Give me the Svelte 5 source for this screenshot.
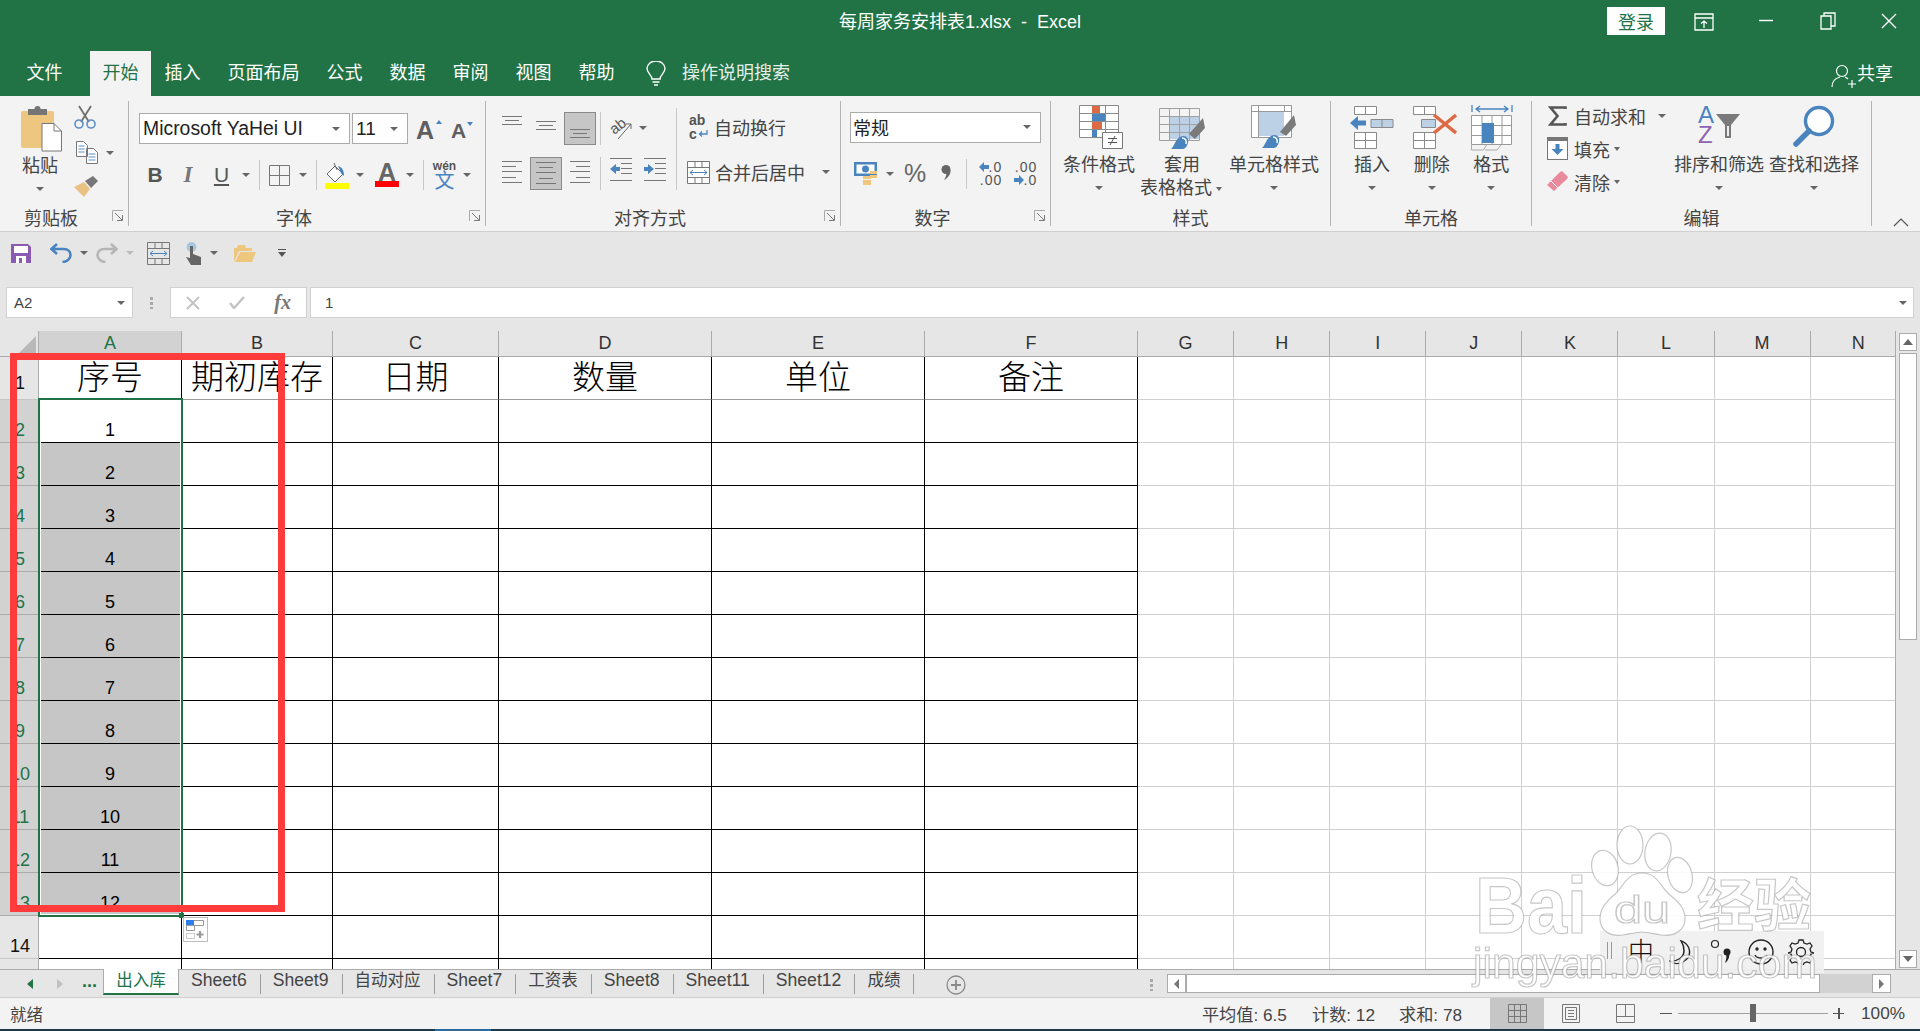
<script>
	const columns = [
		{ id: 'A', width: 143 }, { id: 'B', width: 151 }, { id: 'C', width: 166 }, { id: 'D', width: 213 },
		{ id: 'E', width: 213 }, { id: 'F', width: 213 }, { id: 'G', width: 96.1 }, { id: 'H', width: 96.1 },
		{ id: 'I', width: 96.1 }, { id: 'J', width: 96.1 }, { id: 'K', width: 96.1 }, { id: 'L', width: 96.1 },
		{ id: 'M', width: 96.1 }, { id: 'N', width: 96.1 }
	];
	const heads = ['序号', '期初库存', '日期', '数量', '单位', '备注'];
	const rows = Array.from({ length: 15 }, (_, i) => i + 1);
	const gridTemplate = '39px ' + columns.map((c) => c.width + 'px').join(' ');

	const tabs = [
		{ name: 'Sheet6' }, { name: 'Sheet9' }, { name: '自动对应', cjk: true }, { name: 'Sheet7' },
		{ name: '工资表', cjk: true }, { name: 'Sheet8' }, { name: 'Sheet11' }, { name: 'Sheet12' },
		{ name: '成绩', cjk: true }
	];
	const menu = ['插入', '页面布局', '公式', '数据', '审阅', '视图', '帮助'];

	const alignLines = [[0, 20, 3], [3, 17, 7], [0, 20, 11]];
	const five = (a, b) => [3, 8, 13, 19, 24].map((y, i) => (i % 2 ? [a, b, y] : [0, 20, y]));
</script>

{#snippet bars(list)}
	<svg width="20" height="27" viewBox="0 0 20 27">
		{#each list as l}
			<line x1={l[0]} x2={l[1]} y1={l[2] + 0.5} y2={l[2] + 0.5} stroke="#777" />
		{/each}
	</svg>
{/snippet}

{#snippet launcher()}
	<svg class="launcher" width="12" height="12" viewBox="0 0 12 12" fill="none" stroke="#777">
		<path d="M.5 11V.5H11" stroke="#aaa" /><path d="M3 3l7 7M5 10.500h5.500V5" />
	</svg>
{/snippet}

{#snippet arrowLeft()}
	<svg width="10" height="10" viewBox="0 0 10 10"><path d="M0 5l5-5v3h5v4H5v3z" fill="#4a84bf" /></svg>
{/snippet}

{#snippet arrowRight()}
	<svg width="10" height="10" viewBox="0 0 10 10"><path d="M10 5L5 0v3H0v4h5v3z" fill="#4a84bf" /></svg>
{/snippet}

<div class="app">
	<header class="titlebar">
		<div></div>
		<div class="doc-title">每周家务安排表1.xlsx&nbsp; - &nbsp;Excel</div>
		<div class="win">
			<button class="login">登录</button>
			<svg class="w1" width="20" height="20" viewBox="0 0 20 20" fill="none" stroke="#fff" stroke-width="1.3">
				<path d="M1 1h18v16H1zM1 5h18M10 15V8M7 10.500L10 8l3 2.500" />
			</svg>
			<svg class="w2" width="14" height="14" viewBox="0 0 14 14"><path d="M0 7.500h14" stroke="#fff" stroke-width="1.4" /></svg>
			<svg class="w3" width="16" height="18" viewBox="0 0 16 18" fill="none" stroke="#fff" stroke-width="1.3">
				<path d="M1 4h10v13H1zM4 4V1h11v13h-4" />
			</svg>
			<svg class="w4" width="16" height="16" viewBox="0 0 16 16" fill="none" stroke="#fff" stroke-width="1.4"><path d="M1 1l14 14M15 1L1 15" /></svg>
		</div>
	</header>

	<nav class="menubar">
		<span class="menu first">文件</span>
		<span class="menu active">开始</span>
		{#each menu as m}
			<span class="menu">{m}</span>
		{/each}
		<svg class="bulb" width="20" height="25" viewBox="0 0 20 25" fill="none" stroke="#fff" stroke-width="1.4">
			<path d="M6 18c0-4-5-6-5-10.500a9 7.500 0 0 1 18 0C19 12 14 14 14 18zM6.500 21h7M8 24h4" />
		</svg>
		<span class="search">操作说明搜索</span>
		<span class="share">
			<svg width="26" height="24" viewBox="0 0 26 24" fill="none" stroke="#fff" stroke-width="1.2">
				<circle cx="11" cy="7" r="5.500" /><path d="M1 23c0-6 4-9 8-10M14 13c1 .500 2 1 3 2M17 20h8M21 16v8" />
			</svg>
			共享
		</span>
	</nav>

	<section class="ribbon">
		<!-- 剪贴板 -->
		<div class="group g-clip launch">
			<div class="body">
				<div class="paste">
					<svg width="42" height="46" viewBox="0 0 42 46">
						<rect x="0" y="5" width="33" height="37" rx="2" fill="#edc77f" />
						<rect x="7" y="3" width="19" height="6" fill="#757575" /><circle cx="16.500" cy="3" r="3" fill="#757575" />
						<path d="M21 17.500h12l7.500 7.500v20H21z" fill="#fff" stroke="#777" />
						<path d="M33 17.500V25h7.500" fill="none" stroke="#777" />
					</svg>
					<span class="biglabel">粘贴</span>
					<i class="caret"></i>
				</div>
				<div class="clip-tools">
					<svg width="22" height="24" viewBox="0 0 22 24" fill="none">
						<path d="M5 1l10 16M17 1L7 17" stroke="#6f6f6f" stroke-width="1.800" />
						<circle cx="5" cy="19" r="4" stroke="#5b8fc6" stroke-width="1.600" /><circle cx="17" cy="19" r="4" stroke="#5b8fc6" stroke-width="1.600" />
					</svg>
					<div class="with-caret">
						<svg width="22" height="23" viewBox="0 0 22 23" fill="#fff" stroke="#777">
							<path d="M.5.500h7l4 4v11H.5zM10.500 7.500h7l4 4v11h-11z" />
							<path d="M2.500 5h6M2.500 8h6M2.500 11h6M12.500 13h7M12.500 16h7M12.500 19h7" stroke="#5b8fc6" />
						</svg>
						<i class="caret"></i>
					</div>
					<svg width="24" height="22" viewBox="0 0 24 22">
						<path d="M0 11l10-5 6 7-6 8z" fill="#e9c283" /><path d="M11 5l8-5 5 5-7 7z" fill="#777" />
					</svg>
				</div>
			</div>
			<div class="label">剪贴板{@render launcher()}</div>
		</div>

		<!-- 字体 -->
		<div class="group g-font launch">
			<div class="body col">
				<div class="font-row">
					<div class="combo font-name">Microsoft YaHei UI<i class="caret"></i></div>
					<div class="combo font-size">11<i class="caret"></i></div>
					<span class="grow">A<i class="tri up"></i></span>
					<span class="grow small">A<i class="tri down"></i></span>
				</div>
				<div class="font-tools">
					<b class="fb">B</b>
					<em class="fi">I</em>
					<u class="fu">U</u>
					<i class="caret"></i>
					<span class="vsep"></span>
					<svg width="21" height="21" viewBox="0 0 21 21" fill="none" stroke="#777"><path d="M.5.500h20v20H.500zM10.500 1v19M1 10.500h19" /></svg>
					<i class="caret"></i>
					<span class="vsep"></span>
					<svg width="24" height="27" viewBox="0 0 24 27">
						<path d="M10 4L2 12l8 8 8-8z" fill="#fff" stroke="#666" /><path d="M9 1l3 7" stroke="#666" fill="none" />
						<path d="M13 4c4 1 6 4 6 10-2-2-4-3-4-6z" fill="#4a84bf" /><rect y="21" width="24" height="6" fill="#ff0" />
					</svg>
					<i class="caret"></i>
					<span class="color-a">A</span>
					<i class="caret"></i>
					<span class="vsep"></span>
					<span class="wen"><small>wén</small><span>文</span></span>
					<i class="caret"></i>
				</div>
			</div>
			<div class="label">字体{@render launcher()}</div>
		</div>

		<!-- 对齐方式 -->
		<div class="group g-align launch">
			<div class="body">
				<div class="align-grid">
					<span class="cell">{@render bars(alignLines)}</span>
					<span class="cell mid">{@render bars(alignLines)}</span>
					<span class="cell sel low">{@render bars(alignLines)}</span>
					<span class="vsep"></span>
					<span class="cell orient">
						<svg width="24" height="24" viewBox="0 0 24 24" fill="none" stroke="#666">
							<text x="1" y="15" transform="rotate(-38 9 11)" class="ab">ab</text><path d="M9 23L22 8M17 8h5v5" />
						</svg>
					</span>
					<span class="cell start"><i class="caret"></i></span>

					<span class="cell">{@render bars(five(0, 14))}</span>
					<span class="cell sel">{@render bars(five(3, 17))}</span>
					<span class="cell">{@render bars(five(6, 20))}</span>
					<span class="vsep"></span>
					<span class="cell">
						<svg width="22" height="23" viewBox="0 0 22 23" fill="none" stroke="#777">
							<path d="M0 .500h22M11 5.500h11M11 10.500h11M11 15.500h11M0 22.500h22" /><path d="M0 11l6-5v3h4v4H6v3z" fill="#4a84bf" stroke="none" />
						</svg>
					</span>
					<span class="cell">
						<svg width="22" height="23" viewBox="0 0 22 23" fill="none" stroke="#777">
							<path d="M0 .500h22M11 5.500h11M11 10.500h11M11 15.500h11M0 22.500h22" /><path d="M10 11L4 6v3H0v4h4v3z" fill="#4a84bf" stroke="none" />
						</svg>
					</span>
				</div>
				<div class="wrap-col">
					<div class="wrap-row">
						<span class="abc"><span>ab</span><span>c<svg width="11" height="10" viewBox="0 0 11 10" fill="none" stroke="#4a84bf" stroke-width="1.300"><path d="M9 1v4H2M4 2.500L1.500 5 4 7.500" /></svg></span></span>
						<span>自动换行</span>
					</div>
					<div class="wrap-row merge">
						<svg width="23" height="23" viewBox="0 0 23 23" fill="#fff" stroke="#777">
							<path d="M.5.500h22v22H.500zM.5 6.500h22M.5 16.500h22M8 1v5M15 1v5M8 17v5M15 17v5" />
							<path d="M3 11.500h17M6 9l-3 2.500L6 14M17 9l3 2.500L17 14" stroke="#4a84bf" fill="none" />
						</svg>
						<span>合并后居中</span>
						<i class="caret"></i>
					</div>
				</div>
			</div>
			<div class="label">对齐方式{@render launcher()}</div>
		</div>

		<!-- 数字 -->
		<div class="group g-num launch">
			<div class="body col">
				<div class="combo num-format">常规<i class="caret"></i></div>
				<div class="num-tools">
					<svg width="24" height="23" viewBox="0 0 24 23">
						<rect width="23" height="14" fill="#4a84bf" /><rect x="2.500" y="2.500" width="18" height="9" fill="#fff" /><circle cx="11.500" cy="7" r="3.500" fill="#4a84bf" />
						<path d="M9 14h8v3H9zM9 18h8v5H9z" fill="#eec77f" /><path d="M16 9h7v3h-7zM16 13h7v3h-7z" fill="#eec77f" />
					</svg>
					<i class="caret"></i>
					<span class="pct">%</span>
					<svg class="comma" width="10" height="15" viewBox="0 0 10 15"><circle cx="5" cy="4.500" r="4.500" fill="#666" /><path d="M9.500 5C10 9 7 13 3 15c2-3 3-6 2-9z" fill="#666" /></svg>
					<span class="vsep"></span>
					<span class="dec"><span>{@render arrowLeft()}.0</span><span>.00</span></span>
					<span class="dec"><span>.00</span><span>{@render arrowRight()}.0</span></span>
				</div>
			</div>
			<div class="label">数字{@render launcher()}</div>
		</div>

		<!-- 样式 -->
		<div class="group g-style">
			<div class="body">
				<div class="big s1">
					<span class="icon">
						<svg width="44" height="44" viewBox="0 0 44 44">
							<path d="M.5.500h39v32H.500zM0 8.500h40M0 16.500h40M0 24.500h40M13.500 0v33M26.500 0v33" fill="#fff" stroke="#8a8a8a" />
							<rect x="13" y="1" width="8" height="7" fill="#dd6a45" /><rect x="13" y="9" width="13" height="7" fill="#4a84bf" />
							<rect x="13" y="17" width="10" height="7" fill="#dd6a45" /><rect x="13" y="25" width="5" height="7" fill="#4a84bf" />
							<path d="M23.500 27.500h20v16h-20z" fill="#fff" stroke="#777" /><path d="M29 33.500h9M29 37.500h9M31 40l5-9" stroke="#555" />
						</svg>
					</span>
					<span>条件格式</span><i class="caret"></i>
				</div>
				<div class="big s2">
					<span class="icon low">
						<svg width="46" height="42" viewBox="0 0 46 42">
							<rect x="10" y="9" width="30" height="22" fill="#bcd0e6" />
							<path d="M.5.500h40v32H.500zM0 8.500h40M0 16.500h40M0 24.500h40M10.500 0v33M20.500 0v33M30.500 0v33" fill="none" stroke="#a0a0a0" />
							<path d="M30 26L44 10l2 10-10 11z" fill="#7a7a7a" /><path d="M12 41c3-2 4-9 9-12 3-2 7-1 8 2 1 4-2 10-5 10z" fill="#4a84bf" />
							<path d="M23 30c3 0 5 2 4 6" stroke="#fff" fill="none" stroke-width="1.500" />
						</svg>
					</span>
					<span>套用</span>
					<span class="line2">表格格式<i class="caret tight"></i></span>
				</div>
				<div class="big s3">
					<span class="icon">
						<svg width="46" height="44" viewBox="0 0 46 44">
							<path d="M.5.500h40v32H.500z" fill="#fff" stroke="#999" /><rect x="8" y="7" width="25" height="24" fill="#bcd0e6" />
							<path d="M0 6.500h40M7.500 0v33M33.500 0v7" stroke="#999" fill="none" />
							<path d="M29 27l14-17 2 10-10 11z" fill="#7a7a7a" /><path d="M11 43c3-2 4-9 9-12 3-2 7-1 8 2 1 4-2 10-5 10z" fill="#4a84bf" />
							<path d="M22 32c3 0 5 2 4 6" stroke="#fff" fill="none" stroke-width="1.500" />
						</svg>
					</span>
					<span>单元格样式</span><i class="caret"></i>
				</div>
			</div>
			<div class="label">样式</div>
		</div>

		<!-- 单元格 -->
		<div class="group g-cells">
			<div class="body">
				<div class="big c1">
					<span class="icon">
						<svg width="44" height="44" viewBox="0 0 44 44" fill="#fff" stroke="#8a8a8a">
							<path d="M4.500 1.500h22v8h-22zM15.500 1v8M4.500 27.500h22v16h-22zM4.500 35.500h22M15.500 28v16" />
							<path d="M21 14.500h22v8H21zM32 14v8" fill="#bcd0e6" /><path d="M0 18l8-7v4.500h8v5H8V25z" fill="#4a84bf" stroke="none" />
						</svg>
					</span>
					<span>插入</span><i class="caret"></i>
				</div>
				<div class="big c2">
					<span class="icon">
						<svg width="44" height="44" viewBox="0 0 44 44" fill="#fff" stroke="#8a8a8a">
							<path d="M.5 1.500h22v8H.500zM11.500 1v8M.5 27.500h22v16H.500zM.5 35.500h22M11.500 28v16" />
							<path d="M8.500 14.500h14v8h-14z" fill="#bcd0e6" /><path d="M21 10l22 18M43 10L21 28" stroke="#dd6a45" stroke-width="3.500" fill="none" />
						</svg>
					</span>
					<span>删除</span><i class="caret"></i>
				</div>
				<div class="big c3">
					<span class="icon">
						<svg width="42" height="46" viewBox="0 0 42 46" fill="none" stroke="#8a8a8a">
							<path d="M1 0v7M41 0v7M5 4h32M9 1L5 4l4 3M33 1l4 3-4 3" stroke="#4a84bf" stroke-width="1.300" />
							<path d="M.5 10.500h40v29H.500zM.5 20.500h40M.5 30.500h40M11 10v30M21 10v30M31 10v30" fill="#fff" stroke="#999" />
							<rect x="11" y="18" width="12" height="20" fill="#4a84bf" stroke="none" />
							<path d="M.5 40v5h12l3-5M14 45h12l4-5" stroke="#aaa" />
						</svg>
					</span>
					<span>格式</span><i class="caret"></i>
				</div>
			</div>
			<div class="label">单元格</div>
		</div>

		<!-- 编辑 -->
		<div class="group g-edit">
			<div class="body">
				<div class="edit-col">
					<div class="edit-row">
						<svg width="18" height="20" viewBox="0 0 18 20" fill="none" stroke="#555" stroke-width="2.600"><path d="M17 3V1.500H2L9 10 2 18.500h15V17" /></svg>
						<span>自动求和</span><i class="caret wide"></i>
					</div>
					<div class="edit-row">
						<svg width="21" height="23" viewBox="0 0 21 23">
							<rect x=".5" y=".5" width="20" height="22" fill="#fff" stroke="#777" /><rect width="21" height="4" fill="#777" />
							<path d="M10.500 18l-6-6h4V7h4v5h4z" fill="#4a84bf" />
						</svg>
						<span>填充</span><i class="caret tight"></i>
					</div>
					<div class="edit-row">
						<svg width="21" height="21" viewBox="0 0 21 21"><path d="M0 14L13 1c1-1 2-1 3 0l4 4c1 1 1 2 0 3L7 20z" fill="#e98a9c" /><path d="M4 10l7 7" stroke="#fff" /></svg>
						<span>清除</span><i class="caret tight"></i>
					</div>
				</div>
				<div class="big e1">
					<span class="icon">
						<span class="az"><span class="blue">A</span><span class="purple">Z</span></span>
						<svg width="24" height="24" viewBox="0 0 24 24"><path d="M0 0h24l-9 11v13H9V11z" fill="#7a7a7a" /><path d="M11 12v10h2V12z" fill="#eee" /></svg>
					</span>
					<span>排序和筛选</span><i class="caret"></i>
				</div>
				<div class="big e2">
					<span class="icon">
						<svg width="42" height="42" viewBox="0 0 42 42" fill="none" stroke="#4a84bf">
							<circle cx="26" cy="16" r="13.500" stroke-width="3.400" fill="#fff" /><path d="M16 26L3 39" stroke-width="5.500" stroke-linecap="round" />
						</svg>
					</span>
					<span>查找和选择</span><i class="caret"></i>
				</div>
			</div>
			<div class="label">编辑</div>
		</div>

		<div class="collapse">
			<svg width="16" height="9" viewBox="0 0 16 9" fill="none" stroke="#555" stroke-width="1.200"><path d="M1 8l7-7 7 7" /></svg>
		</div>
	</section>

	<div class="qat">
		<svg class="q-save" width="20" height="19" viewBox="0 0 20 19">
			<path d="M0 0h17l3 3v16H0z" fill="#8a5bb0" /><rect x="3" y="2" width="14" height="7" fill="#fff" /><rect x="5" y="12" width="10" height="7" fill="#fff" /><rect x="8" y="14" width="3" height="5" fill="#8a5bb0" />
		</svg>
		<svg class="q-undo" width="22" height="20" viewBox="0 0 22 20" fill="none" stroke="#4a84bf" stroke-width="2.600"><path d="M1.500 6h12c5 0 7 3 7 6s-3 7-8 7M7 1L1.500 6 7 11" /></svg>
		<i class="caret"></i>
		<svg class="q-redo" width="22" height="20" viewBox="0 0 22 20" fill="none" stroke="#b5b5b5" stroke-width="2.600"><path d="M20.500 6h-12c-5 0-7 3-7 6s3 7 8 7M15 1l5.500 5L15 11" /></svg>
		<i class="caret pale"></i>
		<svg class="q-merge" width="23" height="23" viewBox="0 0 23 23" fill="none" stroke="#777">
			<path d="M.5.500h22v22H.500zM.5 6.500h22M.5 16.500h22M8 1v5M15 1v5M8 17v5M15 17v5" />
			<path d="M3 11.500h17M6 9l-3 2.500L6 14M17 9l3 2.500L17 14" stroke="#4a84bf" />
		</svg>
		<svg class="q-touch" width="17" height="23" viewBox="0 0 17 23">
			<circle cx="6.500" cy="5" r="5" fill="#a9c6e3" /><path d="M5 4h3v8l8 3v8H6l-5-8 4 1z" fill="#666" />
		</svg>
		<i class="caret"></i>
		<svg class="q-open" width="23" height="18" viewBox="0 0 23 18"><path d="M1 18V4h3l1-3h7l1 3h6v3H6L1 18zM2 18l5-10h16l-4 10z" fill="#eec77f" /></svg>
		<svg class="q-more" width="10" height="9" viewBox="0 0 10 9"><path d="M1 .500h8" stroke="#555" /><path d="M1 3h8L5 8z" fill="#555" /></svg>
	</div>

	<div class="formula">
		<div class="namebox">A2<i class="caret"></i></div>
		<span class="dots"></span>
		<div class="fxbox">
			<svg width="14" height="14" viewBox="0 0 14 14" stroke="#c4c4c4" stroke-width="2"><path d="M1 1l12 12M13 1L1 13" /></svg>
			<svg width="16" height="13" viewBox="0 0 16 13" fill="none" stroke="#c4c4c4" stroke-width="2.500"><path d="M1 7l4 5L15 1" /></svg>
			<em class="fx">fx</em>
		</div>
		<div class="fxinput">1<i class="caret"></i></div>
	</div>

	<main class="sheet">
		<div class="grid" style:grid-template-columns={gridTemplate}>
			<div class="corner"><i></i></div>
			{#each columns as c}
				<div class="colhead" class:on={c.id === 'A'}>{c.id}</div>
			{/each}
			{#each rows as r}
				<div class="rowhead" class:on={r >= 2 && r <= 13} class:top-row={r === 1}>{r}</div>
				{#each columns as c, ci}
					{@const ruled = ci < 6 && r <= 14}
					<div
						class="cell-x"
						class:vblack={ci < 6}
						class:hblack={ruled && r > 1}
						class:hgray={ruled && r === 1}
						class:head={r === 1}
						class:picked={ci === 0 && r >= 3 && r <= 13}
					>
						{#if r === 1 && ci < 6}{heads[ci]}{/if}
						{#if ci === 0 && r >= 2 && r <= 13}{r - 1}{/if}
					</div>
				{/each}
			{/each}
		</div>
		<div class="vscroll">
			<span class="sbtn"><i class="tri-b up2"></i></span>
			<span class="thumb"></span>
			<span class="spacer"></span>
			<span class="sbtn"><i class="tri-b"></i></span>
		</div>
		<div class="selection"><i class="handle"></i></div>
		<div class="pasteopt">
			<svg width="19" height="20" viewBox="0 0 19 20" fill="none" stroke="#999">
				<path d="M.5.500h17v5H.500zM.5 5.500h8v5H.500z" /><rect width="8" height="5" fill="#2f7bf0" stroke="none" />
				<path d="M.5 13.500h8v5h-8z" stroke-dasharray="1 1" /><path d="M14 11v7M10.500 14.500h7" stroke-width="2.200" />
			</svg>
		</div>
	</main>

	<div class="tabbar">
		<div class="tabnav">
			<i class="nav-l"></i><i class="nav-r"></i><span>...</span>
		</div>
		<div class="tab active">出入库</div>
		{#each tabs as t}
			<div class="tab" class:cjk={t.cjk}><span>{t.name}</span></div>
		{/each}
		<svg class="addsheet" width="20" height="20" viewBox="0 0 20 20" fill="none" stroke="#888" stroke-width="1.300">
			<circle cx="10" cy="10" r="9" /><path d="M10 5v10M5 10h10" stroke-width="1.800" />
		</svg>
		<span class="dots tabdots"></span>
		<div class="hscroll">
			<span class="hbtn"><i class="tri-l"></i></span>
			<span class="hthumb"></span>
			<span class="hspace"></span>
			<span class="hbtn"><i class="tri-r"></i></span>
		</div>
	</div>

	<footer class="status">
		<span class="ready">就绪</span>
		<span class="stat s-avg">平均值: 6.5</span>
		<span class="stat s-cnt">计数: 12</span>
		<span class="stat s-sum">求和: 78</span>
		<span class="view on">
			<svg width="19" height="19" viewBox="0 0 19 19" fill="none" stroke="#777"><path d="M.5.500h18v18H.500zM.5 6.500h18M.5 12.500h18M6.500 0v19M12.500 0v19" /></svg>
		</span>
		<span class="view">
			<svg width="18" height="19" viewBox="0 0 18 19" fill="none" stroke="#777"><path d="M.5.500h17v18H.500zM3.500 3.500h11v12h-11zM6 6.500h6M6 9.500h6M6 12.500h6" /></svg>
		</span>
		<span class="view">
			<svg width="19" height="19" viewBox="0 0 19 19" fill="none" stroke="#777"><path d="M.5.500h18v18H.500zM.5 12.500h18M9.500 0v13" /></svg>
		</span>
		<span class="zoomctl">
			<i class="minus"></i>
			<span class="slider"><i class="knob"></i></span>
			<i class="plus"></i>
		</span>
		<span class="pctz">100%</span>
	</footer>
	<div class="taskline"><i></i></div>

	<div class="ime">
		<span class="ime-grip"></span>
		<span class="ime-zh">中</span>
		<svg width="24" height="25" viewBox="0 0 24 32" preserveAspectRatio="none" fill="none" stroke="#222" stroke-width="1.500"><path d="M12 1c10 5 12 20 2 27-4 3-10 3-13-1 7 1 14-5 14-13 0-5-1-9-3-13z" /></svg>
		<svg width="22" height="28" viewBox="0 0 22 28" fill="#222"><circle cx="5" cy="6" r="3.500" fill="none" stroke="#222" stroke-width="1.200" /><circle cx="17" cy="14" r="3.500" /><path d="M19 15c1 4-1 8-4 10 1-3 2-6 1-9z" /></svg>
		<svg width="26" height="26" viewBox="0 0 26 26" fill="none" stroke="#222" stroke-width="1.400"><circle cx="13" cy="13" r="12" /><circle cx="9" cy="10" r="1" fill="#222" /><circle cx="17" cy="10" r="1" fill="#222" /><path d="M7 16c2 4 10 4 12 0" /></svg>
		<svg width="26" height="26" viewBox="0 0 26 26" fill="none" stroke="#222" stroke-width="1.300">
			<path d="M11 1h4l1 3 3 1 3-1 2 3-2 3 1 3 3 1-3 1-1 3 2 3-2 3-3-1-3 1-1 3h-4l-1-3-3-1-3 1-2-3 2-3-1-3-3-1 3-1 1-3-2-3 2-3 3 1 3-1z" /><circle cx="13" cy="13" r="4.500" />
		</svg>
	</div>

	<svg class="watermark" width="400" height="190" viewBox="0 0 400 190">
		<g class="wm-shape">
			<ellipse cx="190" cy="35" rx="13" ry="19" /><ellipse cx="218" cy="42" rx="13" ry="19" transform="rotate(10 218 42)" />
			<ellipse cx="165" cy="58" rx="13" ry="18" transform="rotate(-15 165 58)" /><ellipse cx="240" cy="65" rx="12" ry="18" transform="rotate(-15 240 65)" />
			<path d="M202 63c16 0 18 14 28 22 10 8 15 14 15 24 0 12-12 18-24 16-7-1-13-3-19-3s-12 2-19 3c-12 2-23-4-23-16 0-10 5-16 14-24 10-8 12-22 28-22z" />
		</g>
		<text class="wm bold" x="35" y="123" font-size="80" textLength="112" lengthAdjust="spacingAndGlyphs">Bai</text>
		<text class="wm" x="174" y="113" font-size="38" textLength="56" lengthAdjust="spacingAndGlyphs">du</text>
		<text class="wm bold" x="257" y="116" font-size="57">经验</text>
		<text class="wm" x="33" y="168" font-size="43" textLength="344" lengthAdjust="spacingAndGlyphs">jingyan.baidu.com</text>
	</svg>

	<div class="redbox"></div>
</div>

<style>
	:global(body) {
		margin: 0;
		overflow: hidden;
	}

	.app {
		position: relative;
		width: 1920px;
		height: 1031px;
		overflow: hidden;
		display: flex;
		flex-direction: column;
		background: #e6e6e6;
		color: #444;
		font-family: 'Liberation Sans', 'Noto Sans CJK SC', sans-serif;
		font-size: 18px;
	}

	i {
		font-style: normal;
	}

	.caret {
		display: inline-block;
		flex: none;
		width: 0;
		height: 0;
		border-left: 4px solid transparent;
		border-right: 4px solid transparent;
		border-top: 4px solid #666;
	}

	.caret.pale {
		border-top-color: #bbb;
	}

	/* title bar */
	.titlebar {
		height: 51px;
		flex: none;
		background: #217346;
		color: #fff;
		display: grid;
		grid-template-columns: 1fr auto 1fr;
	}

	.doc-title {
		line-height: 44px;
		font-size: 18px;
		white-space: nowrap;
	}

	.win {
		display: flex;
		align-items: flex-start;
		justify-content: flex-end;
		padding-top: 7px;
	}

	.login {
		width: 58px;
		height: 28px;
		border: 0;
		padding: 0;
		background: #fff;
		color: #217346;
		font: inherit;
	}

	.win svg {
		flex: none;
		margin-top: 6px;
	}

	.w1 {
		margin-left: 29px;
	}

	.w2 {
		margin-left: 45px;
	}

	.w3 {
		margin-left: 47px;
		margin-top: 5px !important;
	}

	.w4 {
		margin-left: 45px;
		margin-right: 23px;
	}

	/* menu tabs */
	.menubar {
		height: 45px;
		flex: none;
		background: #217346;
		color: #fff;
		display: flex;
		padding-left: 13px;
		line-height: 44px;
	}

	.menu {
		padding: 0 13.5px;
	}

	.menu.first {
		margin-right: 14px;
	}

	.menu.active {
		padding: 0 12.5px;
		background: #f3f3f3;
		color: #217346;
	}

	.bulb {
		margin: 10px 0 0 18px;
	}

	.search {
		margin-left: 16px;
		color: #e4efe8;
		white-space: nowrap;
	}

	.share {
		margin-left: auto;
		margin-right: 27px;
		display: flex;
		align-items: center;
	}

	.share svg {
		margin-top: 4px;
	}

	/* ribbon */
	.ribbon {
		height: 136px;
		flex: none;
		box-sizing: border-box;
		background: #f3f3f3;
		border-bottom: 1px solid #d0d0d0;
		display: flex;
		align-items: flex-start;
	}

	.group {
		height: 125px;
		margin-top: 5px;
		flex: none;
		box-sizing: border-box;
		border-right: 1px solid #b4b4b4;
		display: flex;
		flex-direction: column;
	}

	.body {
		height: 101px;
		display: flex;
		flex: none;
	}

	.body.col {
		flex-direction: column;
	}

	.label {
		position: relative;
		height: 24px;
		box-sizing: border-box;
		padding-top: 9px;
		line-height: 16px;
		text-align: center;
		white-space: nowrap;
	}

	.launch .label {
		padding-right: 26px;
	}

	.launcher {
		position: absolute;
		right: 4px;
		bottom: 4px;
	}

	.g-clip {
		width: 129px;
	}

	.g-font {
		width: 357px;
	}

	.g-align {
		width: 355px;
	}

	.g-num {
		width: 210px;
	}

	.g-style {
		width: 280px;
	}

	.g-cells {
		width: 201px;
	}

	.g-edit {
		width: 340px;
	}

	.vsep {
		display: block;
		width: 1px;
		height: 100%;
		background: #c8c8c8;
		justify-self: center;
	}

	/* clipboard */
	.paste {
		width: 52px;
		margin-left: 14px;
		padding-top: 5px;
		display: flex;
		flex-direction: column;
		align-items: center;
	}

	.paste svg {
		margin-left: 3px;
		flex: none;
	}

	.biglabel {
		line-height: 24px;
		margin-top: 2px;
	}

	.paste .caret {
		margin-top: 9px;
	}

	.clip-tools {
		margin-left: 9px;
		padding-top: 4px;
		display: flex;
		flex-direction: column;
		gap: 12px;
		align-items: flex-start;
	}

	.clip-tools > svg:first-child {
		margin-left: -1px;
	}

	.with-caret {
		display: flex;
		align-items: center;
		gap: 8px;
		margin-left: 1px;
	}

	.clip-tools > svg:last-child {
		margin-left: -1px;
	}

	/* font */
	.combo {
		box-sizing: border-box;
		height: 31px;
		background: #fff;
		border: 1px solid #ababab;
		color: #222;
		display: flex;
		align-items: center;
		justify-content: space-between;
		padding: 0 9px 0 3px;
		white-space: nowrap;
	}

	.font-row {
		display: flex;
		margin: 11px 0 0 10px;
		align-items: center;
	}

	.font-name {
		width: 211px;
		font-size: 19.4px;
	}

	.font-size {
		width: 56px;
		margin-left: 2px;
		font-size: 19px;
	}

	.grow {
		position: relative;
		margin-left: 8px;
		margin-top: 4px;
		font-size: 25px;
		font-weight: 700;
		color: #5f5f5f;
		width: 22px;
	}

	.grow.small {
		font-size: 21px;
		margin-left: 13px;
		width: 20px;
	}

	.tri {
		position: absolute;
		right: -4px;
		top: 4px;
		border-left: 3.500px solid transparent;
		border-right: 3.500px solid transparent;
	}

	.tri.up {
		border-bottom: 4px solid #4a84bf;
	}

	.tri.down {
		border-top: 4px solid #4a84bf;
		right: -2px;
		top: 3px;
	}

	.font-tools {
		margin: 14px 0 0 10px;
		height: 32px;
		display: grid;
		grid-template-columns: 32px 34px 33px 16px 10px 31px 16px 10px 31px 16px 38px 8px 18px 25px 20px;
		justify-items: center;
		align-items: center;
	}

	.font-tools .vsep {
		height: 30px;
	}

	.fb,
	.fi,
	.fu {
		font-size: 21px;
		color: #555;
		font-family: 'Liberation Sans', sans-serif;
	}

	.fb {
		font-weight: 700;
	}

	.fi {
		font-weight: 700;
		font-family: 'Liberation Serif', serif;
		font-size: 23px;
		color: #777;
	}

	.color-a {
		display: block;
		width: 24px;
		height: 24px;
		box-sizing: border-box;
		border-bottom: 6px solid #f00;
		font-size: 25px;
		line-height: 19px;
		text-align: center;
		color: #666;
		font-weight: 700;
	}

	.wen {
		display: flex;
		flex-direction: column;
		align-items: center;
		line-height: 1;
	}

	.wen small {
		font-size: 12px;
		font-weight: 700;
		color: #555;
	}

	.wen span {
		color: #4a84bf;
		font-size: 20px;
		line-height: 18px;
	}

	/* alignment */
	.align-grid {
		margin: 11px 0 0 9px;
		height: 78px;
		display: grid;
		grid-template-columns: 34px 34px 34px 7px 34px 34px;
		grid-template-rows: 33px 33px;
		row-gap: 12px;
		align-items: center;
		justify-items: center;
	}

	.cell {
		display: flex;
		align-items: flex-start;
		justify-content: center;
		width: 100%;
		height: 33px;
		box-sizing: border-box;
		padding-top: 1px;
	}

	.cell.mid {
		padding-top: 6px;
	}

	.cell.sel {
		width: 32px;
		background: #c6c6c6;
		border: 1px solid #8a8a8a;
		justify-self: center;
	}

	.cell.low {
		padding-top: 13px;
	}

	.cell.orient {
		padding-top: 4px;
	}

	.cell.start {
		justify-content: flex-start;
		padding: 14px 0 0 1px;
	}

	.ab {
		font-size: 15px;
		fill: #555;
		stroke: none;
	}

	.wrap-col {
		margin-left: 4px;
		padding-left: 10px;
		margin-top: 7px;
		height: 82px;
		border-left: 1px solid #c8c8c8;
		display: flex;
		flex-direction: column;
		justify-content: space-between;
	}

	.wrap-row {
		display: flex;
		align-items: center;
		gap: 3px;
		height: 36px;
		white-space: nowrap;
		margin-top: 1px;
	}

	.merge {
		gap: 5px;
		margin-top: 0;
	}

	.merge .caret {
		margin-left: 12px;
	}

	.abc {
		display: flex;
		flex-direction: column;
		width: 22px;
		margin-left: 2px;
		font-size: 14px;
		line-height: 14px;
		color: #555;
		font-weight: 700;
	}

	.abc span {
		display: flex;
		align-items: center;
		gap: 1px;
	}

	/* number */
	.num-format {
		width: 191px;
		margin: 11px 0 0 9px;
		padding-left: 2px;
		padding-bottom: 2px;
	}

	.num-tools {
		margin: 14px 0 0 13px;
		display: flex;
		align-items: center;
		height: 33px;
	}

	.num-tools .caret {
		margin-left: 8px;
	}

	.pct {
		margin-left: 10px;
		font-size: 25px;
		color: #666;
	}

	.comma {
		margin-left: 15px;
		margin-top: -3px;
		flex: none;
	}

	.num-tools .vsep {
		margin: 0 9px 0 15px;
		height: 30px;
	}

	.dec {
		display: flex;
		flex-direction: column;
		align-items: flex-end;
		width: 26px;
		margin-right: 9px;
		font-size: 14px;
		line-height: 13px;
		color: #555;
		letter-spacing: 1px;
	}

	.dec span {
		display: flex;
		align-items: center;
	}

	/* large buttons */
	.big {
		display: flex;
		flex-direction: column;
		align-items: center;
		flex: none;
		line-height: 24px;
		white-space: nowrap;
	}

	.big .caret {
		margin-top: 9px;
	}

	.icon {
		display: flex;
		height: 52px;
		align-items: flex-start;
		padding-top: 4px;
		box-sizing: border-box;
	}

	.icon.low {
		padding-top: 7px;
	}

	.s1 .icon {
		margin-left: 4px;
	}

	.c2 .icon {
		margin-left: 6px;
	}

	.c3 .icon {
		margin-left: 2px;
	}

	.line2 {
		position: relative;
		margin: -1px 0 0 -2px;
	}

	.caret.tight {
		margin: 0 0 3px 4px !important;
		border-left-width: 3.500px;
		border-right-width: 3.500px;
	}

	.s1 {
		width: 80px;
		margin-left: 8px;
	}

	.s2 {
		width: 86px;
	}

	.s3 {
		width: 96px;
		margin-left: 1px;
	}

	.c1 {
		width: 60px;
		margin-left: 11px;
	}

	.c2,
	.c3 {
		width: 59.500px;
	}

	/* editing */
	.edit-col {
		width: 125px;
		margin-left: 15px;
		margin-top: -2px;
		display: grid;
		grid-auto-rows: 33px;
		flex: none;
	}

	.edit-row {
		display: flex;
		align-items: center;
		white-space: nowrap;
	}

	.edit-row svg {
		width: 21px;
		flex: none;
		margin-right: 6px;
	}

	.caret.wide {
		margin-left: 12px;
	}

	.edit-row .caret.tight {
		margin: 0 0 0 4px !important;
	}

	.e1,
	.e2 {
		width: 92px;
	}

	.e1 {
		margin-left: 1px;
	}

	.e2 {
		margin-left: 3px;
	}

	.e1 .icon {
		gap: 2px;
	}

	.e1 .icon svg {
		margin-top: 9px;
	}

	.az {
		display: flex;
		flex-direction: column;
		font-size: 24px;
		line-height: 20px;
		font-weight: 400;
	}

	.blue {
		color: #4a84bf;
	}

	.purple {
		color: #8e62b5;
	}

	.collapse {
		margin-left: 21px;
		margin-top: 115px;
	}

	/* quick access */
	.qat {
		height: 42px;
		flex: none;
		display: flex;
		align-items: center;
	}

	.q-save {
		margin-left: 11px;
	}

	.q-undo {
		margin-left: 19px;
	}

	.qat .caret {
		margin-left: 8px;
	}

	.q-redo {
		margin-left: 8px;
	}

	.q-merge {
		margin-left: 13px;
	}

	.q-touch {
		margin-left: 15px;
	}

	.q-open {
		margin-left: 15px;
	}

	.q-more {
		margin-left: 21px;
	}

	/* formula bar */
	.formula {
		height: 57px;
		box-sizing: border-box;
		flex: none;
		padding: 13px 6px;
		display: flex;
		align-items: stretch;
	}

	.namebox {
		width: 127px;
		box-sizing: border-box;
		background: #fff;
		border: 1px solid #d0d0d0;
		padding: 0 7px;
		display: flex;
		align-items: center;
		justify-content: space-between;
		font-size: 15px;
		color: #444;
	}

	.dots {
		display: block;
		width: 3px;
		height: 12px;
		margin: auto 17px;
		background: repeating-linear-gradient(#a8a8a8 0 3px, transparent 3px 5px);
	}

	.fxbox {
		width: 137px;
		box-sizing: border-box;
		background: #fff;
		border: 1px solid #d0d0d0;
		display: flex;
		align-items: center;
		justify-content: space-between;
		padding: 0 15px;
	}

	.fx {
		font-family: 'Liberation Serif', serif;
		font-weight: 700;
		font-size: 20px;
		color: #777;
	}

	.fxinput {
		flex: 1;
		margin-left: 3px;
		box-sizing: border-box;
		background: #fff;
		border: 1px solid #d0d0d0;
		padding: 0 6px 0 14px;
		display: flex;
		align-items: center;
		justify-content: space-between;
		font-size: 15px;
	}

	/* sheet */
	.sheet {
		position: relative;
		height: 638px;
		flex: none;
		display: flex;
		overflow: hidden;
		background: #fff;
	}

	.grid {
		width: 1895px;
		flex: none;
		display: grid;
		grid-template-rows: 26px repeat(15, 43px);
		align-content: start;
		color: #000;
		overflow: hidden;
	}

	.corner {
		background: #e6e6e6;
		border-right: 1px solid #ababab;
		border-bottom: 1px solid #ababab;
		box-sizing: border-box;
		position: relative;
		overflow: hidden;
	}

	.corner i {
		position: absolute;
		right: 2px;
		bottom: 2px;
		border-left: 18px solid transparent;
		border-bottom: 18px solid #b9b9b9;
	}

	.colhead {
		background: #e6e6e6;
		border-right: 1px solid #ababab;
		border-bottom: 1px solid #ababab;
		box-sizing: border-box;
		text-align: center;
		line-height: 23px;
		padding-top: 1px;
		color: #333;
	}

	.colhead.on {
		background: #d2d2d2;
		color: #217346;
	}

	.rowhead {
		background: #e6e6e6;
		border-right: 1px solid #ababab;
		border-bottom: 1px solid #c6c6c6;
		box-sizing: border-box;
		display: flex;
		align-items: flex-end;
		justify-content: center;
		padding: 0 0 2px 2px;
		line-height: 20px;
		color: #111;
	}

	.rowhead.top-row {
		padding-bottom: 6px;
	}

	.rowhead.on {
		background: #d2d2d2;
		color: #217346;
		border-bottom-color: #ababab;
	}

	.cell-x {
		box-sizing: border-box;
		border-right: 1px solid #d0d0d0;
		border-bottom: 1px solid #d0d0d0;
		display: flex;
		align-items: flex-end;
		justify-content: center;
		padding-bottom: 2px;
		line-height: 20px;
		color: #000;
		white-space: nowrap;
	}

	.vblack {
		border-right-color: #000;
	}

	.hblack {
		border-bottom-color: #000;
	}

	.hgray {
		border-bottom-color: #9c9c9c;
	}

	.cell-x.head {
		font-size: 33px;
		font-weight: 300;
		line-height: 40px;
		padding-bottom: 1px;
	}

	.picked {
		background: #c6c6c6;
	}

	.selection {
		position: absolute;
		left: 38px;
		top: 67px;
		width: 145px;
		height: 519px;
		box-sizing: border-box;
		border: 2px solid #217346;
		box-shadow: inset 0 0 0 1px #fff;
	}

	.handle {
		position: absolute;
		right: -3px;
		bottom: -3px;
		width: 5px;
		height: 5px;
		background: #217346;
	}

	.pasteopt {
		position: absolute;
		left: 183px;
		top: 586px;
		width: 25px;
		height: 25px;
		box-sizing: border-box;
		border: 1px solid #bdbdbd;
		background: #fff;
		padding: 2px 0 0 2px;
		display: flex;
	}

	.vscroll {
		flex: 1;
		background: #e6e6e6;
		border-left: 1px solid #ababab;
		display: flex;
		flex-direction: column;
		align-items: center;
		padding: 2px 0 1px;
		box-sizing: border-box;
	}

	.sbtn {
		width: 18px;
		height: 18px;
		background: #fff;
		border: 1px solid #ababab;
		box-sizing: border-box;
		display: flex;
		align-items: center;
		justify-content: center;
		flex: none;
	}

	.tri-b {
		border-left: 5px solid transparent;
		border-right: 5px solid transparent;
		border-top: 6px solid #666;
	}

	.tri-b.up2 {
		border-top: 0;
		border-bottom: 6px solid #666;
	}

	.thumb {
		width: 18px;
		height: 287px;
		margin-top: 2px;
		background: #fff;
		border: 1px solid #ababab;
		box-sizing: border-box;
		flex: none;
	}

	.spacer {
		flex: 1;
	}

	/* sheet tabs */
	.tabbar {
		height: 29px;
		flex: none;
		box-sizing: border-box;
		border-top: 1px solid #ababab;
		border-bottom: 1px solid #cfcfcf;
		display: flex;
		align-items: flex-start;
		background: #e6e6e6;
	}

	.tabnav {
		width: 103px;
		height: 27px;
		flex: none;
		display: flex;
		align-items: center;
	}

	.nav-l {
		margin-left: 27px;
		border-top: 5px solid transparent;
		border-bottom: 5px solid transparent;
		border-right: 6px solid #217346;
	}

	.nav-r {
		margin-left: 24px;
		border-top: 5px solid transparent;
		border-bottom: 5px solid transparent;
		border-left: 6px solid #c0c0c0;
	}

	.tabnav span {
		margin-left: 19px;
		color: #217346;
		font-weight: 700;
		line-height: 20px;
		margin-top: -6px;
	}

	.tab {
		padding-top: 4px;
		height: 20px;
		flex: none;
	}

	.tab span {
		display: block;
		height: 20px;
		line-height: 13px;
		padding: 0 13px 0 12px;
		border-right: 1px solid #9c9c9c;
		font-size: 17.6px;
		color: #444;
	}

	.tab.cjk span {
		font-size: 16.5px;
	}

	.tab.active {
		box-sizing: border-box;
		width: 76px;
		height: 26px;
		margin-top: -1px;
		padding: 0;
		background: #fff;
		border-left: 1px solid #ababab;
		border-right: 1px solid #ababab;
		border-bottom: 2px solid #217346;
		color: #217346;
		text-align: center;
		font-size: 16.500px;
		line-height: 22px;
	}

	.addsheet {
		margin: 5px 0 0 32px;
		flex: none;
	}

	.tabdots {
		margin: 9px 14px 0 auto;
	}

	.hscroll {
		width: 724px;
		height: 19px;
		margin: 4px 29px 0 0;
		flex: none;
		display: flex;
		background: #d2d2d2;
	}

	.hbtn {
		width: 19px;
		flex: none;
		background: #fff;
		border: 1px solid #ababab;
		box-sizing: border-box;
		display: flex;
		align-items: center;
		justify-content: center;
	}

	.tri-l {
		border-top: 5px solid transparent;
		border-bottom: 5px solid transparent;
		border-right: 5px solid #777;
	}

	.tri-r {
		border-top: 5px solid transparent;
		border-bottom: 5px solid transparent;
		border-left: 5px solid #777;
	}

	.hthumb {
		width: 634px;
		background: #fff;
		border: 1px solid #ababab;
		box-sizing: border-box;
		flex: none;
	}

	.hspace {
		flex: 1;
	}

	/* status bar */
	.status {
		height: 31px;
		flex: none;
		background: #f3f3f3;
		display: flex;
		align-items: center;
		font-size: 17.2px;
		color: #444;
		white-space: nowrap;
	}

	.ready {
		margin-left: 10px;
		font-size: 16.500px;
	}

	.s-avg {
		margin-left: auto;
	}

	.s-cnt {
		margin-left: 25px;
	}

	.s-sum {
		margin-left: 24px;
	}

	.view {
		height: 100%;
		display: flex;
		align-items: center;
		justify-content: center;
		width: 54px;
		flex: none;
	}

	.view.on {
		margin-left: 28px;
		background: #c6c6c6;
	}

	.zoomctl {
		margin-left: 8px;
		display: flex;
		align-items: center;
	}

	.minus {
		width: 12px;
		height: 1.500px;
		background: #555;
	}

	.slider {
		position: relative;
		width: 150px;
		height: 1px;
		margin-left: 6px;
		background: #a0a0a0;
	}

	.knob {
		position: absolute;
		left: 72px;
		top: -9px;
		width: 6px;
		height: 18px;
		background: #666;
	}

	.plus {
		position: relative;
		margin-left: 5px;
		width: 11px;
		height: 1.500px;
		background: #555;
	}

	.plus::after {
		content: '';
		position: absolute;
		left: 5px;
		top: -5px;
		width: 1.500px;
		height: 11px;
		background: #555;
	}

	.pctz {
		margin-left: 17px;
		margin-right: 15px;
	}

	.taskline {
		flex: 1;
		background: #1c3a4a;
		position: relative;
	}

	.taskline i {
		position: absolute;
		left: 435px;
		top: 0;
		width: 56px;
		height: 100%;
		background: #2a6a9c;
	}

	/* overlays */
	.redbox {
		position: absolute;
		left: 10px;
		top: 353px;
		width: 275px;
		height: 559px;
		box-sizing: border-box;
		border: 7px solid #ff3b3b;
	}

	.ime {
		position: absolute;
		left: 1600px;
		top: 931px;
		width: 224px;
		height: 42px;
		background: rgba(240, 240, 240, 0.92);
		display: flex;
		align-items: center;
		box-sizing: border-box;
	}

	.ime-grip {
		width: 3px;
		height: 17px;
		margin: 0 0 4px 7px;
		border-left: 1px solid #999;
		border-right: 1px solid #999;
		flex: none;
		box-sizing: content-box;
	}

	.ime-zh {
		margin-left: 15px;
		font-size: 26px;
		font-weight: 300;
		line-height: 30px;
		color: #111;
		width: 28px;
		text-align: center;
		flex: none;
	}

	.ime svg {
		flex: none;
	}

	.ime svg:nth-of-type(1) {
		margin-left: 14px;
	}

	.ime svg:nth-of-type(2) {
		margin-left: 17px;
	}

	.ime svg:nth-of-type(3) {
		margin-left: 16px;
	}

	.ime svg:nth-of-type(4) {
		margin-left: 14px;
	}

	.watermark {
		position: absolute;
		left: 1440px;
		top: 810px;
		pointer-events: none;
		filter: blur(0.4px);
	}

	.wm-shape {
		fill: rgba(255, 255, 255, 0.88);
		stroke: rgba(130, 130, 130, 0.45);
		stroke-width: 1.200;
	}

	.wm {
		fill: rgba(255, 255, 255, 0.88);
		stroke: rgba(130, 130, 130, 0.45);
		stroke-width: 1.200;
		font-family: 'Liberation Sans', 'Noto Sans CJK SC', sans-serif;
	}

	.wm.bold {
		font-weight: 700;
	}
</style>
